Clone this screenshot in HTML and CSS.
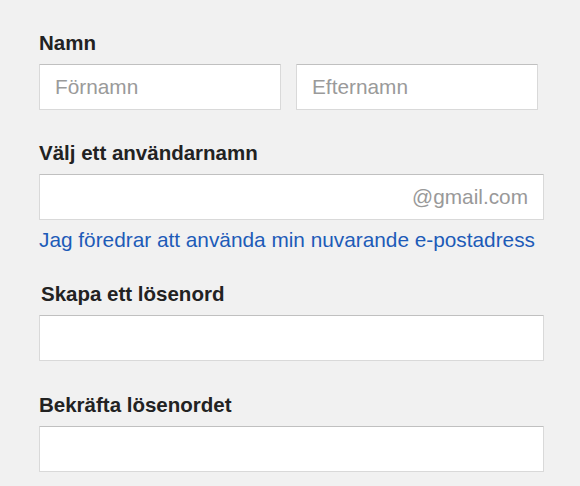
FILE: index.html
```html
<!DOCTYPE html>
<html lang="sv">
<head>
<meta charset="utf-8">
<title>Skapa konto</title>
<link rel="stylesheet" href="styles.css">
</head>
<body>
<form class="signup">
  <div class="field field-name">
    <label class="label">Namn</label>
    <div class="name-row">
      <input class="box" type="text" placeholder="Förnamn">
      <input class="box" type="text" placeholder="Efternamn">
    </div>
  </div>
  <div class="field field-user">
    <label class="label">Välj ett användarnamn</label>
    <div class="box box-suffix">
      <input class="bare" type="text">
      <span class="suffix">@gmail.com</span>
    </div>
    <a class="link" href="#">Jag föredrar att använda min nuvarande e-postadress</a>
  </div>
  <div class="field field-pass">
    <label class="label label-indent">Skapa ett lösenord</label>
    <input class="box box-wide" type="password">
  </div>
  <div class="field field-confirm">
    <label class="label">Bekräfta lösenordet</label>
    <input class="box box-wide" type="password">
  </div>
</form>
</body>
</html>
```
FILE: styles.css
```css
html, body {
  margin: 0;
  padding: 0;
  background: #f1f1f1;
}
body {
  font-family: "Liberation Sans", Arial, sans-serif;
  width: 580px;
  height: 486px;
  overflow: hidden;
}
.signup {
  width: 505px;
  padding: 31px 0 0 39px;
  display: flex;
  flex-direction: column;
}
.field {
  display: flex;
  flex-direction: column;
}
.field-user { margin-top: 31px; }
.field-pass { margin-top: 30px; }
.field-confirm { margin-top: 32px; }
.label {
  font-size: 20.5px;
  line-height: 24px;
  font-weight: bold;
  color: #222;
  margin-bottom: 9px;
}
.label-indent { padding-left: 2px; }
.name-row {
  display: flex;
  gap: 15px;
  width: 498px;
}
.box {
  box-sizing: border-box;
  height: 46px;
  margin: 0;
  background: #fff;
  border: 1px solid #d9d9d9;
  border-top-color: #c0c0c0;
  border-radius: 1px;
  padding: 0 15px;
  font-family: "Liberation Sans", Arial, sans-serif;
  font-size: 20.8px;
  color: #222;
  outline: none;
}
.name-row .box {
  width: 242px;
}
.box::placeholder {
  color: #9a9a9a;
}
.box-wide {
  width: 505px;
}
.box-suffix {
  width: 505px;
  display: flex;
  align-items: center;
}
.bare {
  flex: 1;
  min-width: 0;
  border: 0;
  padding: 0;
  margin: 0;
  background: transparent;
  font: inherit;
  outline: none;
}
.suffix {
  color: #999;
  font-size: 20.8px;
}
.link {
  margin-top: 8px;
  font-size: 20.8px;
  line-height: 24px;
  color: #1d5bb8;
  text-decoration: none;
}
```
